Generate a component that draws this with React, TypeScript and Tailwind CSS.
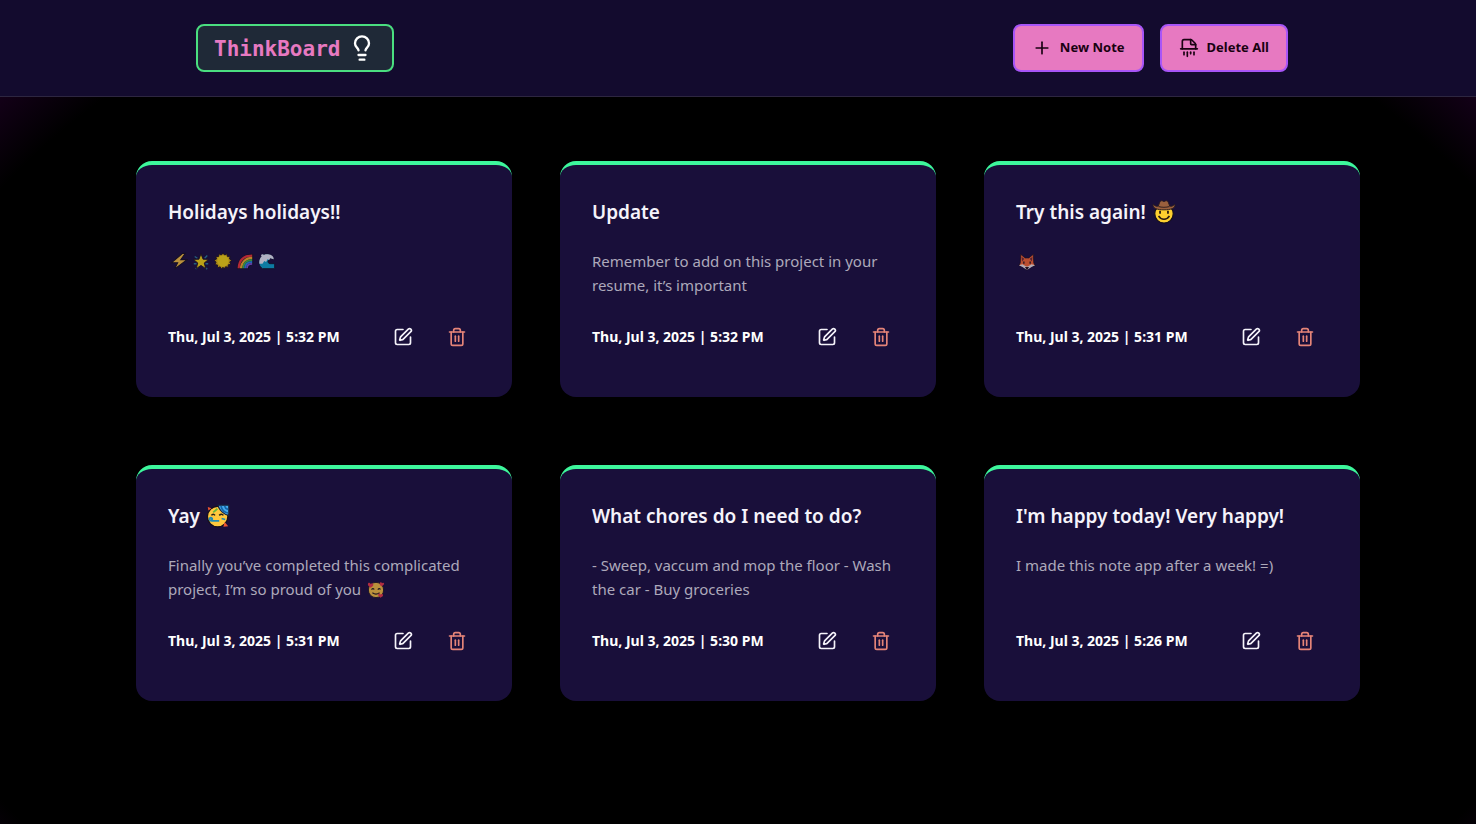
import type { ReactNode } from 'react';
import { Lightbulb, Plus, Shredder, SquarePen, Trash2 } from 'lucide-react';

type EmojiName = 'bolt' | 'star' | 'sun' | 'rainbow' | 'wave' | 'cowboy' | 'fox' | 'party' | 'love';

const drawings: Record<EmojiName, ReactNode> = {
  bolt: <path d="M14 1.500 1.500 12h7L5 19 19 8.500h-7L17 1.500Z" fill="#ffc83d" stroke="#15101c" strokeWidth="1.200" />,
  star: (
    <>
      <path d="M3 5l3 2M17 4l-3 3M2 13h3M18 13h-3M4 19l2-2M17 19l-3-2" stroke="#28829d" strokeWidth="1.500" />
      <path d="m10 2 2.300 6 6.200.2-4.900 4 1.700 6.300-5.300-3.600-5.300 3.600 1.700-6.300-4.900-4 6.200-.2Z" fill="#ffe00a" stroke="#16111d" strokeWidth="1" />
    </>
  ),
  sun: (
    <>
      <path d="m10 1 1.700 2.400L14.300 2l.6 2.900 3-.1-.7 2.900 2.600 1.500-2.300 1.800 1.300 2.700-2.900.5-.2 3-2.800-.9L11.200 19 10 16.900 8.300 19l-1.500-2.500-2.800 1-.1-3-2.900-.5 1.300-2.700L.2 9.400l2.600-1.600L2 4.900l3 .1.600-3 2.600 1.400Z" fill="#e5b80b" stroke="#1a121b" />
      <circle cx="10" cy="10" r="6.300" fill="#ffe00a" />
    </>
  ),
  rainbow: (
    <>
      <path d="M1.500 18.500C2 8 8 2.500 18.500 2.500v11c-3 0-4.500 2-4.500 5Z" fill="#111" stroke="#15101c" />
      <path d="M3 18C3.500 9 9 4 18 4" fill="none" stroke="#f43435" strokeWidth="2.500" />
      <path d="M5.500 18C6 11 11 6.500 18 6.500" fill="none" stroke="#ffb224" strokeWidth="2.300" />
      <path d="M7.800 18c.3-5.500 4.200-9.200 10.200-9.200" fill="none" stroke="#45bd42" strokeWidth="2.300" />
      <path d="M10 18c.3-4 3-7 8-7" fill="none" stroke="#258de9" strokeWidth="2.200" />
      <path d="M12.200 18c0-2.700 2-4.800 5.800-4.800" fill="none" stroke="#8155d8" strokeWidth="2" />
    </>
  ),
  wave: (
    <>
      <path d="M18.500 18.500H5C1.500 16 .5 13 1.500 9.500 3 4 7 1.500 12 2.500c3 .6 5 2.500 5.500 5.500l-4-1-1 2c-2.500.5-1.500 4 1 4h5Z" fill="#08aad0" stroke="#111322" />
      <path d="M1.500 13C.8 7 5 2 11 2.600c4 .3 6.500 2.500 6.500 5.400l-4-1-1 2-2-1-1.500 3-2-1-2 3Z" fill="#f2f7ff" />
      <circle cx="5" cy="4" r="1.500" fill="#f2f7ff" />
    </>
  ),
  cowboy: (
    <>
      <circle cx="10" cy="11.500" r="7.700" fill="#ffd02f" stroke="#17101b" />
      <path d="M6.700 9v2.500M13.300 9v2.500" stroke="#2b1b12" strokeWidth="1.500" />
      <path d="M5.500 13.300c2 3.700 7 3.700 9 0" fill="none" stroke="#2b1b12" strokeWidth="1.300" />
      <path d="M1 3.500c1.200 1.400 3 2 4.200 1.600L6.500 1.700c.6-1.400 2-1.300 3.500-.4 1.500-.9 2.900-1 3.500.4l1.300 3.400c1.300.4 3-.2 4.200-1.600.8 3.500-3.500 4.700-9 4.700S.2 7 1 3.500Z" fill="#9a603d" stroke="#291b20" strokeWidth=".8" />
      <path d="M5.300 5.300q4.700 1.700 9.400 0" fill="none" stroke="#4a2e25" />
    </>
  ),
  fox: (
    <>
      <path d="M3 1.500 8 5.500h4l5-4 .5 9.500 1.500 3-5 1-4 4-4-4-5-1 1.500-3Z" fill="#ff692c" stroke="#17111b" strokeWidth=".8" />
      <path d="m4 4.500 3 2-2.500 3ZM16 4.500l-3 2 2.500 3Z" fill="#712d2e" />
      <path d="m1 13.500 4-1 4 2.500h2l4-2.500 4 1-4 2-5 3.500-5-3.500Z" fill="#f4ede8" />
      <path d="M6.500 9.500v2.500M13.500 9.500v2.500M9 16.200h2L10 18Z" stroke="#24171d" strokeWidth="1.500" />
    </>
  ),
  party: (
    <>
      <circle cx="9.700" cy="10.500" r="8.500" fill="#ffc83d" stroke="#15101c" />
      <path d="M10 1h9v8.500c-3.500-.5-8-4-9-8.500Z" fill="#45abed" stroke="#17233b" />
      <path d="M12.500 1.500c.5 3 3 5.500 6 6M15.500 1.500c.3 1.500 1.500 2.700 3 3" fill="none" stroke="#1465a8" strokeWidth="1.400" />
      <path d="M4.500 9.500Q6 7.500 7.500 9.500M11 9.500q2-2 3.500 0" fill="none" stroke="#25211c" strokeWidth="1.300" />
      <path d="M11 14H5c-2.700 0-2.500-3-.5-2.500 1.200.4.800 1.800-.3 1.500" fill="none" stroke="#208ab3" strokeWidth="1.500" />
      <path d="m1.500 2.500 3 1-2.500 2ZM15.500 15l3 3.500-4 .5Z" fill="#ee552f" />
      <path d="M6 7 9.500 4" stroke="#69b63d" strokeWidth="1.500" />
      <path d="m13 12 3 1" stroke="#208ab3" strokeWidth="1.300" />
    </>
  ),
  love: (
    <>
      <circle cx="10" cy="10" r="8.500" fill="#ffc83d" stroke="#15101c" />
      <path d="M5 9.500q1.700-2 3 0M12 9.500q1.700-2 3 0M6 13q4 3 8 0" fill="none" stroke="#241c18" strokeWidth="1.300" />
      <path d="M4 7.500C0 5 .5 2 2.500 2 4 2 4 3.500 4 3.500S6 1.500 7 3.500C7.500 5 5.500 6.500 4 7.500ZM16 6c-3-2-2-4.500-.5-4.500 1 0 1.200 1 1.200 1S18.500 1 19 2.800C19.300 4 17.500 5.300 16 6ZM15 18.500c-3.500-2-3-4.500-1.500-4.500 1.200 0 1.700 1.200 1.700 1.200s1.800-1.700 2.600 0c.5 1.300-1.300 2.500-2.800 3.300Z" fill="#f23b45" />
    </>
  ),
};

function Emoji({ name, large = false }: { name: EmojiName; large?: boolean }) {
  return (
    <svg
      role="img"
      aria-label={name}
      viewBox="0 0 20 20"
      className={large ? 'ml-px inline-block size-6 align-[-5px]' : 'mx-[2px] inline-block size-[18px] align-[-4px] opacity-70'}
    >
      {drawings[name]}
    </svg>
  );
}

interface Note {
  id: number;
  title: ReactNode;
  content: ReactNode;
  date: string;
}

const notes: Note[] = [
  {
    id: 1,
    title: 'Holidays holidays!!',
    content: (
      <span className="flex h-6 items-center">
        <Emoji name="bolt" />
        <Emoji name="star" />
        <Emoji name="sun" />
        <Emoji name="rainbow" />
        <Emoji name="wave" />
      </span>
    ),
    date: 'Thu, Jul 3, 2025 | 5:32 PM',
  },
  { id: 2, title: 'Update', content: 'Remember to add on this project in your resume, it’s important', date: 'Thu, Jul 3, 2025 | 5:32 PM' },
  { id: 3, title: <>Try this again! <Emoji name="cowboy" large /></>, content: <Emoji name="fox" />, date: 'Thu, Jul 3, 2025 | 5:31 PM' },
  { id: 4, title: <>Yay <Emoji name="party" large /></>, content: <>Finally you’ve completed this complicated project, I’m so proud of you <Emoji name="love" /></>, date: 'Thu, Jul 3, 2025 | 5:31 PM' },
  { id: 5, title: 'What chores do I need to do?', content: '- Sweep, vaccum and mop the floor - Wash the car - Buy groceries', date: 'Thu, Jul 3, 2025 | 5:30 PM' },
  { id: 6, title: "I'm happy today! Very happy!", content: 'I made this note app after a week! =)', date: 'Thu, Jul 3, 2025 | 5:26 PM' },
];

function NoteCard({ note }: { note: Note }) {
  return (
    <article className="rounded-2xl border-t-4 border-[#3df79c] bg-[#190f3a] p-8">
      <h2 className="text-[19px] leading-[30px] font-semibold text-[#f5f3fa]">{note.title}</h2>
      <p className="mt-[22px] min-h-12 text-[15px] leading-6 text-[#ada9ba]">{note.content}</p>
      <div className="mt-4 mb-1 flex items-center justify-between">
        <time className="text-sm font-bold whitespace-nowrap text-white">{note.date}</time>
        <div className="flex gap-2">
          <button type="button" aria-label="Edit note" className="flex h-12 w-[46px] items-center justify-center text-[#f5f3fa]">
            <SquarePen size={20} />
          </button>
          <button type="button" aria-label="Delete note" className="flex h-12 w-[46px] items-center justify-center text-[#e58478]">
            <Trash2 size={20} />
          </button>
        </div>
      </div>
    </article>
  );
}

function ActionButton({ icon, children }: { icon: ReactNode; children: ReactNode }) {
  return (
    <button
      type="button"
      className="flex h-12 items-center gap-2 rounded-lg border-2 border-[#a855f7] bg-[#e779c1] px-[17px] text-[13px] font-bold whitespace-nowrap text-[#190211]"
    >
      {icon}
      {children}
    </button>
  );
}

export default function App() {
  return (
    <div className="min-h-screen bg-black bg-[radial-gradient(ellipse_at_50%_60%,#000_83%,#2a0034_100%)] font-['Noto_Sans','Segoe_UI',sans-serif]">
      <header className="border-b border-[#2d2640] bg-[#130b2e]">
        <div className="flex flex-wrap items-center justify-between gap-4 px-6 py-6 xl:pr-[188px] xl:pl-[196px]">
          <a href="#" className="flex h-12 items-center gap-2 rounded-lg border-2 border-[#4ade80] bg-[#1f2937] px-4">
            <span className="pt-1 font-['DejaVu_Sans_Mono',monospace] text-[21px] font-bold text-[#e779c1]">ThinkBoard</span>
            <Lightbulb size={28} className="text-white" />
          </a>
          <div className="flex gap-4">
            <ActionButton icon={<Plus size={20} />}>New Note</ActionButton>
            <ActionButton icon={<Shredder size={20} />}>Delete All</ActionButton>
          </div>
        </div>
      </header>
      <main className="grid gap-x-12 gap-y-[68px] px-6 py-16 md:grid-cols-2 xl:grid-cols-3 xl:pr-[116px] xl:pl-[136px]">
        {notes.map((note) => (
          <NoteCard key={note.id} note={note} />
        ))}
      </main>
    </div>
  );
}
